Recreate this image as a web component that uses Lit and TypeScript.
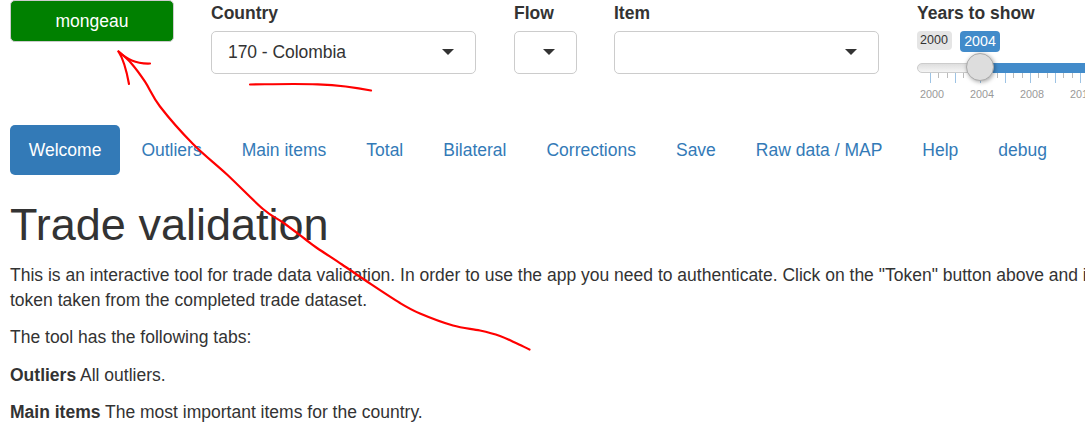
import { LitElement, html, css, svg } from "lit";
import { customElement, property } from "lit/decorators.js";

@customElement("select-field")
class SelectField extends LitElement {
  @property() label = "";
  @property() value = "";
  static styles = css`
    :host { display: flex; flex-direction: column; }
    .label { box-sizing: border-box; font-weight: 700; line-height: 25px; height: 31px; padding-top: 1px; }
    .box { box-sizing: border-box; height: 43px; border: 1px solid #ccc; border-radius: 5px; padding: 0 21px 0 16px;
      display: flex; align-items: center; justify-content: space-between; background: #fff; }
    .value { letter-spacing: -0.05px; }
    .caret { width: 12px; height: 6px; display: block; position: relative; top: -1px; }
  `;
  render() {
    return html`<div class="label">${this.label}</div>
      <div class="box"><span class="value">${this.value}</span>
        <svg class="caret" viewBox="0 0 12 6"><path d="M0 0H12L6 6Z" fill="#333"/></svg></div>`;
  }
}

@customElement("year-slider")
class YearSlider extends LitElement {
  static styles = css`
    :host { display: block; }
    .label { box-sizing: border-box; font-weight: 700; line-height: 25px; height: 31px; padding-top: 1px; }
    .tags { display: flex; align-items: flex-start; gap: 8px; height: 32px; }
    .tag { box-sizing: border-box; font-size: 12.5px; line-height: 19px; height: 19px; width: 35px; padding-right: 1px; text-align: center; border-radius: 4px; background: #e5e5e5; color: #333; }
    .tag.active { width: 40px; height: 21px; line-height: 21px; font-size: 14.2px; padding: 0; background: #428bca; color: #fff; }
    .track { position: relative; box-sizing: border-box; height: 10px; width: 300px; border: 1px solid #ccc; border-radius: 6px;
      background: linear-gradient(#dedede, #f5f5f5); }
    .range { position: absolute; left: 62px; right: 0; top: -1px; height: 10px; background: #428bca; }
    .knob { position: absolute; box-sizing: border-box; left: 48px; top: -11px; width: 28px; height: 28px; border-radius: 50%;
      border: 1px solid #aaa; background: #ddd; box-shadow: 1px 1px 4px rgba(0,0,0,.35); }
    .grid { display: block; width: 200px; height: 30px; }
    .grid text { font-size: 10.8px; fill: #999; text-anchor: middle; }
  `;
  render() {
    const majors = [0, 1, 2, 3, 4, 5, 6];
    const years = [2000, 2004, 2008, 2012];
    return html`<div class="label">Years to show</div>
      <div class="tags"><span class="tag">2000</span><span class="tag active">2004</span></div>
      <div class="track"><div class="range"></div><div class="knob"></div></div>
      <svg class="grid" viewBox="0 0 200 30">
        ${majors.map((i) => svg`
          <rect x=${13 + i * 25} y="0" width="1" height="10" fill="#9dc3e4"/>
          <rect x=${21 + i * 25} y="0" width="1" height="5" fill="#bbb"/>
          <rect x=${30 + i * 25} y="0" width="1" height="5" fill="#bbb"/>`)}
        ${years.map((y, i) => svg`<text x=${15 + i * 50} y="25">${y}</text>`)}
      </svg>`;
  }
}

type Point = [number, number];

const ARROW: Point[] = [
  [118.5, 51.5], [131, 63], [145, 81.7], [160, 106.5], [193, 144], [227, 174.5], [263, 209], [283, 222.5], [305, 239],
  [317, 248], [342, 264.5], [367, 281.5], [400, 303], [420, 313.5], [453, 325.5], [480, 330.5], [500, 336], [517, 343.5], [529.5, 349.5],
];

/** Joins the points with a smooth Catmull-Rom curve. */
function smoothPath(p: Point[]): string {
  let d = `M${p[0][0]} ${p[0][1]}`;
  for (let i = 0; i < p.length - 1; i++) {
    const a = p[Math.max(i - 1, 0)], b = p[i], c = p[i + 1], e = p[Math.min(i + 2, p.length - 1)];
    d += `C${b[0] + (c[0] - a[0]) / 6} ${b[1] + (c[1] - a[1]) / 6} ${c[0] - (e[0] - b[0]) / 6} ${c[1] - (e[1] - b[1]) / 6} ${c[0]} ${c[1]}`;
  }
  return d;
}

@customElement("app-root")
class AppRoot extends LitElement {
  static styles = css`
    :host { display: block; position: relative; width: 1085px; height: 424px; overflow: hidden; background: #fff;
      font: 17.5px/25px "Liberation Sans", Arial, sans-serif; color: #333; }
    .controls { display: flex; padding-left: 10px; height: 125px; }
    .token { box-sizing: border-box; flex: none; width: 164px; height: 42px; margin-right: 37px; border: 1px solid #ccc; border-radius: 5px;
      background: green; color: #fff; display: flex; align-items: center; justify-content: center; }
    .wide { width: 265px; flex: none; margin-right: 38px; }
    .narrow { width: 63px; flex: none; margin-right: 37px; }
    .slider { flex: none; }
    .tabs { display: flex; gap: 2.5px; padding-left: 10px; height: 50px; }
    .tab { padding: 12.5px 18.75px; color: #337ab7; border-radius: 5px; white-space: nowrap; }
    .tab.active { background: #337ab7; color: #fff; }
    .content { padding-left: 10px; width: 1300px; }
    h1 { font-size: 45px; line-height: 50px; font-weight: 400; margin: 25px 0 12.5px; }
    p { margin: 0 0 12.5px; }
    .marks { position: absolute; left: 0; top: 0; width: 1085px; height: 424px; pointer-events: none; }
  `;
  render() {
    const tabs = ["Welcome", "Outliers", "Main items", "Total", "Bilateral", "Corrections", "Save", "Raw data / MAP", "Help", "debug"];
    return html`
      <div class="controls">
        <div class="token">mongeau</div>
        <select-field class="wide" label="Country" value="170 - Colombia"></select-field>
        <select-field class="narrow" label="Flow"></select-field>
        <select-field class="wide" label="Item"></select-field>
        <year-slider class="slider"></year-slider>
      </div>
      <nav class="tabs">${tabs.map((t, i) => html`<a class="tab ${i === 0 ? "active" : ""}">${t}</a>`)}</nav>
      <main class="content">
        <h1>Trade validation</h1>
        <p>This is an interactive tool for trade data validation. In order to use the app you need to authenticate. Click on the "Token" button above and i<br>token taken from the completed trade dataset.</p>
        <p>The tool has the following tabs:</p>
        <p><b>Outliers</b> All outliers.</p>
        <p><b>Main items</b> The most important items for the country.</p>
      </main>
      <svg class="marks" viewBox="0 0 1085 424" fill="none" stroke="#f00" stroke-width="2.2" stroke-linecap="round" stroke-linejoin="round">
        <path d="M250 84.500C290 84 330 82 371 90.5"/>
        <path d="M150 63.5C135 64 127 59 118.500 51.500C124 60 127 73 129 84"/>
        <path d=${smoothPath(ARROW)}/>
      </svg>`;
  }
}
